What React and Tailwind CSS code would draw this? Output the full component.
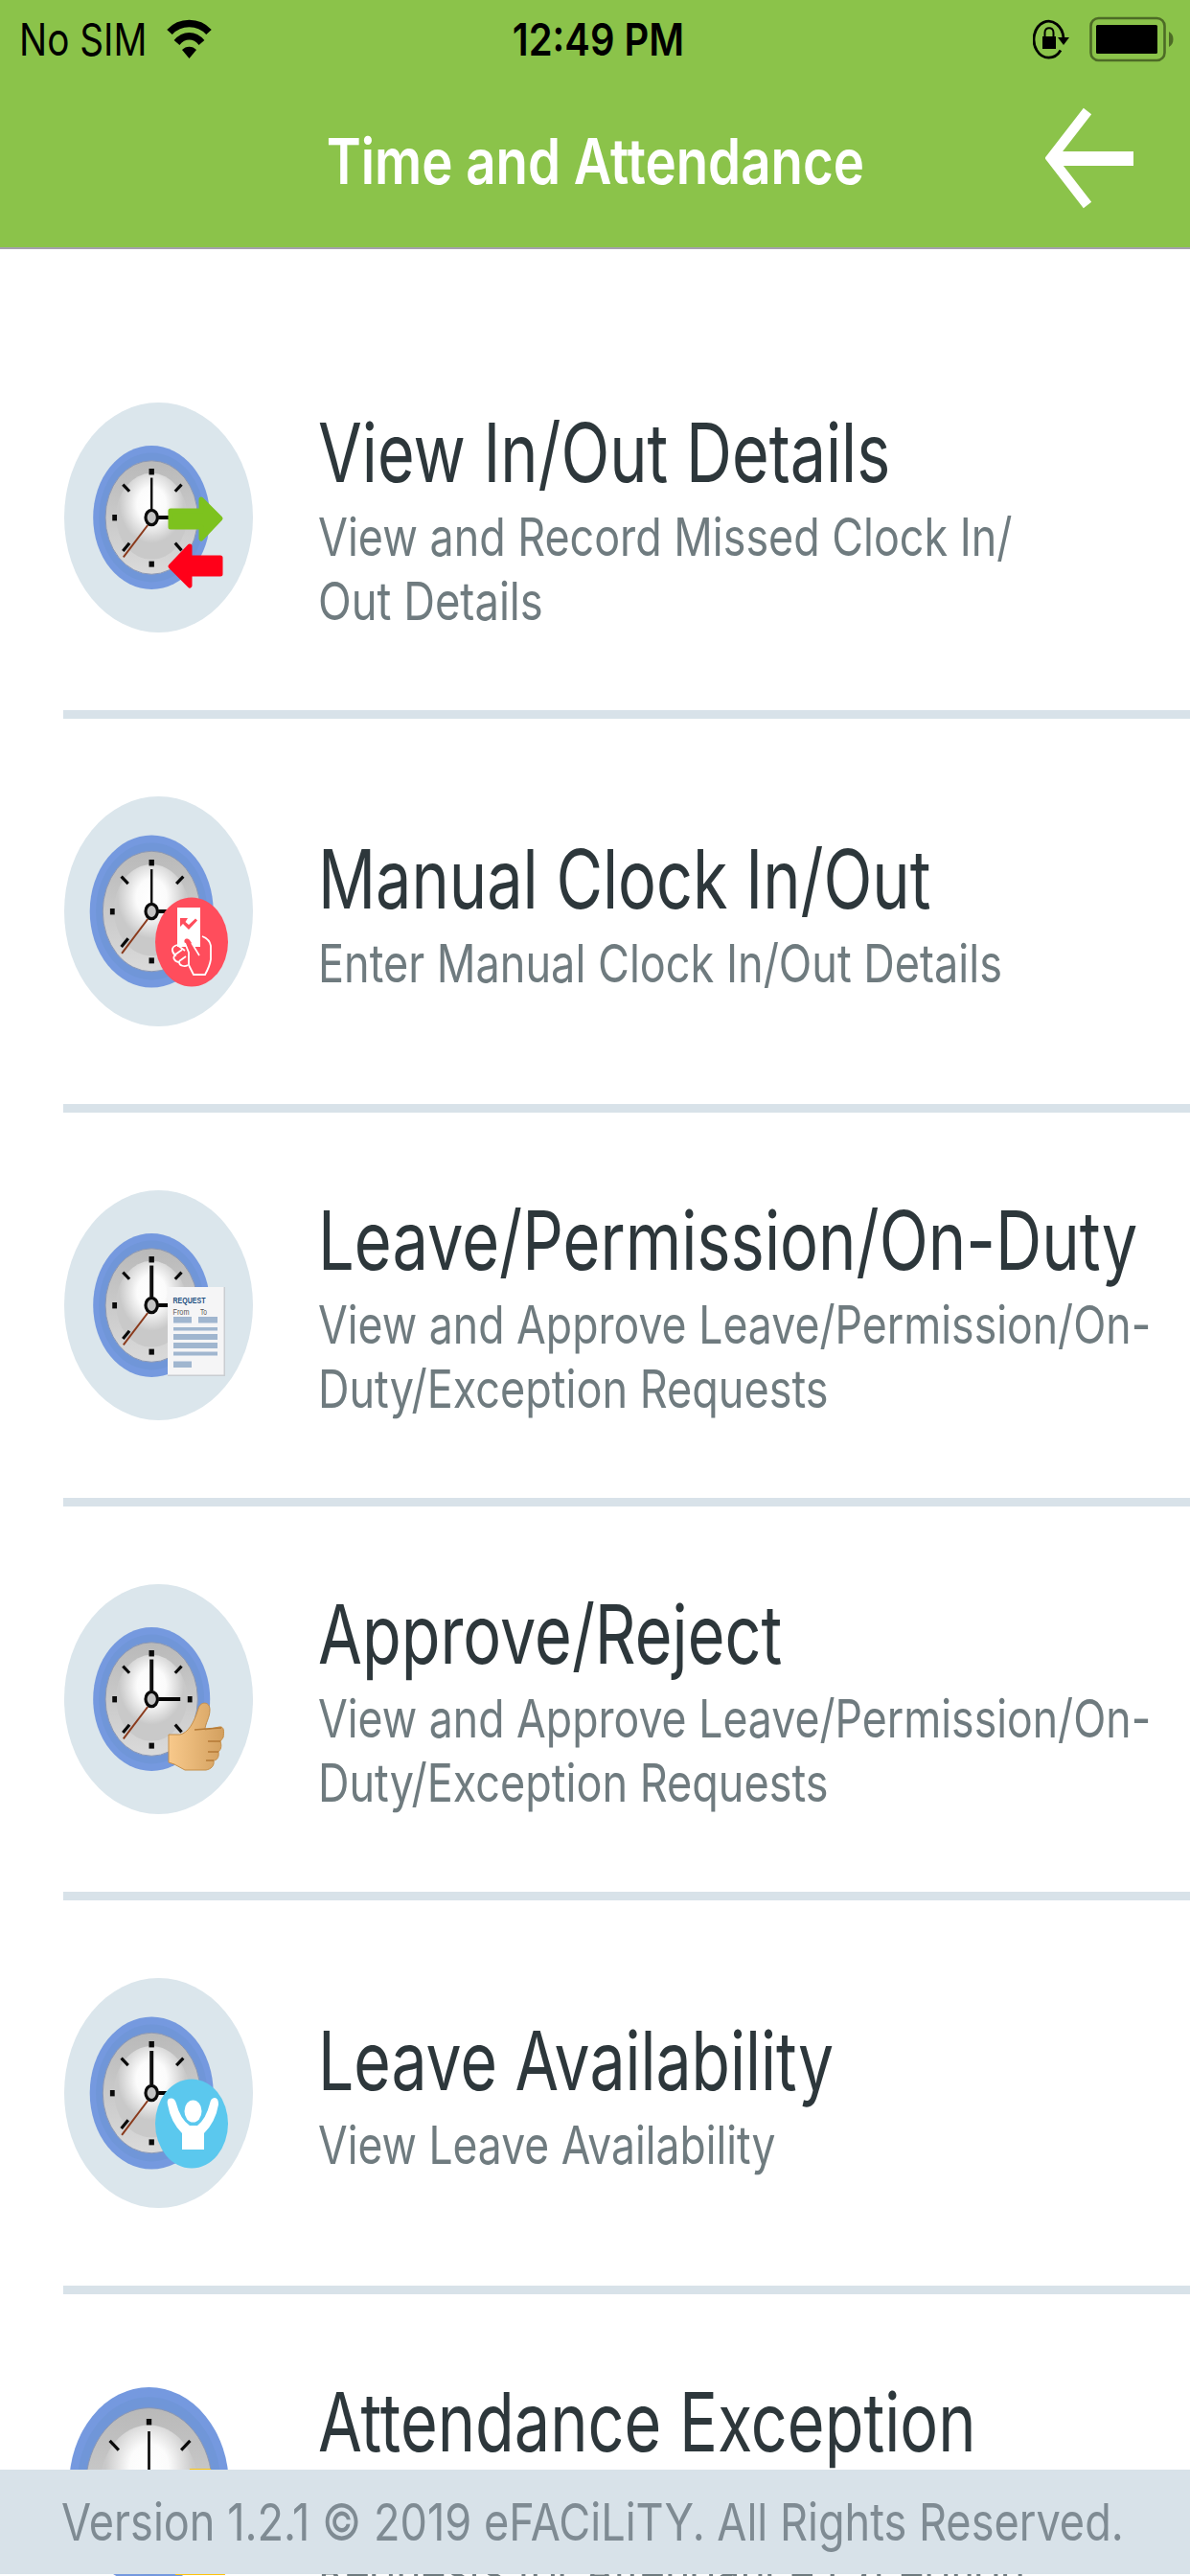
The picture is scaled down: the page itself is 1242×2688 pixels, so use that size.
import React from "react";

function Face({ id, cx, cy, rx, ry, minute = 3 }) {
  const fx = rx * 0.79;
  const fy = ry * 0.79;
  return (
    <g>
      <defs>
        <radialGradient id={id} cx="0.5" cy="0.36" r="0.45">
          <stop offset="0" stopColor="#ffffff" />
          <stop offset="0.45" stopColor="#fbfbfb" />
          <stop offset="1" stopColor="#c9c9c9" />
        </radialGradient>
        <linearGradient id={id + "b"} x1="0" y1="0" x2="0" y2="1">
          <stop offset="0" stopColor="#b9b9b9" />
          <stop offset="1" stopColor="#dadada" />
        </linearGradient>
      </defs>
      <ellipse cx={cx} cy={cy} rx={rx} ry={ry} fill="#7599df" />
      <ellipse cx={cx} cy={cy} rx={rx * 0.9} ry={ry * 0.9} fill="#7096d8" />
      <ellipse cx={cx} cy={cy} rx={fx} ry={fy} fill={"url(#" + id + "b)"} stroke="#8a97b4" strokeWidth="1" />
      <ellipse cx={cx} cy={cy - fy * 0.02} rx={fx * 0.77} ry={fy * 0.76} fill={"url(#" + id + ")"} />
      <g fill="#0a0a0a">
        <rect x={cx - 2.7} y={cy - fy * 0.86} width="5.4" height="6.4" />
        <rect x={cx - 2.7} y={cy + fy * 0.77} width="5.4" height="6" />
        <rect x={cx - fx * 0.85} y={cy - 3} width="4.8" height="6.4" />
        <rect x={cx + fx * 0.78} y={cy - 3} width="4.8" height="6.4" />
      </g>
      <g stroke="#0a0a0a" strokeWidth="3.2">
        <path d={`M${cx - fx * 0.62} ${cy - fy * 0.58}L${cx - fx * 0.48} ${cy - fy * 0.46}`} />
        <path d={`M${cx + fx * 0.65} ${cy - fy * 0.58}L${cx + fx * 0.51} ${cy - fy * 0.46}`} />
        <path d={`M${cx - fx * 0.62} ${cy + fy * 0.59}L${cx - fx * 0.48} ${cy + fy * 0.45}`} />
        <path d={`M${cx + fx * 0.51} ${cy + fy * 0.45}L${cx + fx * 0.65} ${cy + fy * 0.58}`} />
      </g>
      <path d={`M${cx} ${cy - 9}V${cy - fy * 0.7}`} stroke="#111" strokeWidth={minute} />
      <path d={`M${cx + 7} ${cy}H${cx + 30}`} stroke="#050505" strokeWidth="4" />
      <path d={`M${cx - 4} ${cy + 8}L${cx - fx * 0.61} ${cy + fy * 0.7}`} stroke="#8a3a1c" strokeWidth="2" />
      <ellipse cx={cx} cy={cy} rx="6.2" ry="7.6" fill="#c4c4c4" stroke="#0a0a0a" strokeWidth="3.2" />
    </g>
  );
}

function Badge({ kind }) {
  if (kind === "arrows")
    return (
      <g strokeLinejoin="round" strokeWidth="5">
        <path d="M115 113H147V101L167 121L147 142V130H115Z" fill="#7dc21e" stroke="#7dc21e" />
        <path d="M167 162H135V150L115 171L135 191V179H167Z" fill="#ff0019" stroke="#ff0019" />
      </g>
    );
  if (kind === "card")
    return (
      <g>
        <ellipse cx="137" cy="152" rx="38" ry="46.5" fill="#ff4d5c" />
        <path d="M122 116H146V157H122Z" fill="#fff" />
        <path d="M125 127V136L128 133L134 139L143 129.500L141 127.500L134 134L130.500 131L133 127Z" fill="#ff4d5c" />
        <path d="M145 165L135 150C132 147 128 149 130 153L134 163V176L139 186H151Q156 177 157 170V156Q156 149 146 146V162Z" fill="#ff4d5c" />
        <path d="M130 153L134 163V176L139 186H151Q156 177 157 170V156Q156 149 148 146" fill="none" stroke="#fff" strokeWidth="1.800" />
        <path d="M122 155C115 157 116 162 120 166C116 168 120 173 124 173C124 177 130 178 133 176M120 165L127 160M124 172L131 167M122 155L130 161" fill="none" stroke="#fff" strokeWidth="1.800" />
        <path d="M145 166L137 153" fill="none" stroke="#fff" strokeWidth="1.600" />
      </g>
    );
  if (kind === "form")
    return (
      <g>
        <rect x="112" y="101" width="60" height="93" fill="#c9cdd1" />
        <rect x="112" y="101" width="58.500" height="91.500" fill="#f5f5f6" />
        <text x="117.500" y="117.500" fontFamily="Liberation Sans, sans-serif" fontWeight="700" fontSize="9.500" textLength="34" lengthAdjust="spacingAndGlyphs" fill="#1d5080">REQUEST</text>
        <text x="117.500" y="130" fontFamily="Liberation Sans, sans-serif" fontSize="8.500" textLength="17" lengthAdjust="spacingAndGlyphs" fill="#555">From</text>
        <text x="146" y="130" fontFamily="Liberation Sans, sans-serif" fontSize="8.500" textLength="7" lengthAdjust="spacingAndGlyphs" fill="#555">To</text>
        <g fill="#a0b6cf">
          <rect x="118" y="132" width="19" height="6.500" />
          <rect x="144" y="132" width="20" height="6.500" />
          <rect x="118" y="143" width="46" height="3.500" />
          <rect x="118" y="150" width="46" height="6" />
          <rect x="118" y="159" width="46" height="6" />
          <rect x="118" y="168.500" width="46" height="4" />
          <rect x="118" y="178.500" width="19" height="6.500" />
        </g>
      </g>
    );
  if (kind === "thumb")
    return (
      <g>
        <defs>
          <linearGradient id="skin" x1="0" x2="1">
            <stop offset="0" stopColor="#f8c98b" />
            <stop offset="1" stopColor="#d3a05f" />
          </linearGradient>
        </defs>
        <path d="M113 157H125C133 155 139 146 144 130C146 122 156 122 156 131C156 140 151 145 151 152L166 149C171 148 171 154 170 160L167 164C169 170 167 173 165 175C166 181 163 184 160 184C161 190 157 193 152 194H130L119 188L113 186Z" fill="url(#skin)" stroke="#c68f49" strokeWidth="1" />
        <path d="M140 152L152 151L168 150M154 164H167M154 175H165M152 184H160" fill="none" stroke="#b57a36" strokeWidth="1.500" />
      </g>
    );
  if (kind === "person")
    return (
      <g>
        <ellipse cx="137" cy="152" rx="38" ry="46.500" fill="#5bc8ee" />
        <ellipse cx="138.500" cy="139" rx="9" ry="11.500" fill="#fff" />
        <path d="M113 126Q111 128 112 132Q115 150 127 162V179H150V162Q162 150 165 132Q165 125 161 125Q157 125 156 131Q152 147 143 154H135Q125 147 121 131Q119 124 113 126Z" fill="#fff" />
      </g>
    );
  return null;
}

function RowIcon({ kind, big }) {
  if (kind === "exception")
    return (
      <svg className="h-[240px] w-[197px] shrink-0" viewBox="0 0 197 240">
        <Face id="fx" cx={88.5} cy={119} rx={83.5} ry={103} minute={2.8} />
        <path d="M131 101H153L168 212H116Z" fill="#fdc30b" />
      </svg>
    );
  return (
    <svg className="h-[240px] w-[197px] shrink-0" viewBox="0 0 197 240">
      <ellipse cx="98.500" cy="120" rx="98.500" ry="120" fill="#dbe6ec" />
      <Face id={"f" + kind} cx={91.2} cy={120} rx={big ? 64.5 : 61} ry={big ? 79.5 : 75} minute={kind === "arrows" || kind === "card" ? 2.5 : 4} />
      <g transform="translate(-4 0)">
        <Badge kind={kind} />
      </g>
    </svg>
  );
}

const rows = [
  { kind: "arrows", title: ["View In/Out Details", "scale-x-[0.7815]"], lines: [["View and Record Missed Clock In/", "scale-x-[0.8155]"], ["Out Details", "scale-x-[0.825]"]] },
  { kind: "card", big: true, title: ["Manual Clock In/Out", "scale-x-[0.783]"], lines: [["Enter Manual Clock In/Out Details", "scale-x-[0.819]"]] },
  { kind: "form", title: ["Leave/Permission/On-Duty", "scale-x-[0.786]"], lines: [["View and Approve Leave/Permission/On-", "scale-x-[0.811]"], ["Duty/Exception Requests", "scale-x-[0.8185]"]] },
  { kind: "thumb", title: ["Approve/Reject", "scale-x-[0.783]"], lines: [["View and Approve Leave/Permission/On-", "scale-x-[0.811]"], ["Duty/Exception Requests", "scale-x-[0.8185]"]] },
  { kind: "person", big: true, title: ["Leave Availability", "scale-x-[0.777]"], lines: [["View Leave Availability", "scale-x-[0.808]"]] },
  { kind: "exception", title: ["Attendance Exception", "scale-x-[0.783]"], lines: [["\u00a0", "scale-x-[0.81]"], ["Requests for Attendance Exception", "scale-x-[0.81]"]] },
];

function Row({ row }) {
  return (
    <li className="ml-[66px] flex h-[411px] shrink-0 items-center border-b-[9px] border-[#d8e2e9]">
      <div className="flex pl-px">
        <RowIcon kind={row.kind} big={row.big} />
      </div>
      <div className="ml-[68px] flex flex-col items-start whitespace-nowrap">
        <h2 className={"origin-left text-[85px] leading-[108px] text-[#2d373b] " + row.title[1]}>{row.title[0]}</h2>
        {row.lines.map(([text, scale]) => (
          <p key={text} className={"origin-left text-[55px] leading-[66.6px] text-[#6f7b7f] " + scale}>{text}</p>
        ))}
      </div>
    </li>
  );
}

function StatusBar() {
  return (
    <div className="grid h-[82px] grid-cols-3 items-center text-[47px] leading-[82px] text-black">
      <div className="flex items-center pl-[20px]">
        <span className="w-[154px] origin-left scale-x-[0.823] whitespace-nowrap">No SIM</span>
        <svg className="h-[42px] w-[47px]" viewBox="0 0 47 42">
          <path d="M3 13.500C14 1.500 33 1.500 44 13.500" fill="none" stroke="#000" strokeWidth="7.500" />
          <path d="M10.500 24.500C18 15.500 29 15.500 36.500 24.500" fill="none" stroke="#000" strokeWidth="7.500" />
          <path d="M16 32C20 27.500 27 27.500 31 32L23.500 41Z" fill="#000" />
        </svg>
      </div>
      <div className="flex justify-center pl-[8px]">
        <span className="scale-x-[0.85] whitespace-nowrap font-semibold">12:49 PM</span>
      </div>
      <div className="flex items-center justify-end gap-[21px] pr-[16px]">
        <svg className="h-[42px] w-[38px]" viewBox="0 0 38 42">
          <path d="M29 32.500A15.500 19 0 1 1 32 20" fill="none" stroke="#000" strokeWidth="2.800" />
          <path d="M26 19H38L32 27Z" fill="#000" />
          <rect x="10" y="18" width="14" height="13" fill="#000" />
          <path d="M12.500 19V14C12.500 7.500 21.500 7.500 21.500 14V19" fill="none" stroke="#000" strokeWidth="2" />
        </svg>
        <svg className="h-[48px] w-[89px]" viewBox="0 0 89 48">
          <rect x="1.500" y="2" width="77" height="44" rx="8" fill="none" stroke="#4d6b26" strokeWidth="2.600" />
          <rect x="7" y="9" width="64" height="30" rx="1.500" fill="#000" />
          <path d="M83 16C89 19 89 29 83 32Z" fill="#4d6b26" />
        </svg>
      </div>
    </div>
  );
}

export default function App() {
  return (
    <div className="flex h-[2688px] w-[1242px] flex-col overflow-hidden bg-white font-['Inter',sans-serif]">
      <header className="h-[260px] shrink-0 border-b-2 border-[#a5a0ae] bg-[#8bc34a]">
        <StatusBar />
        <div className="grid h-[173px] grid-cols-[1fr_auto_1fr] items-center">
          <span />
          <h1 className="scale-x-[0.827] whitespace-nowrap text-[66px] leading-[173px] font-semibold text-white">Time and Attendance</h1>
          <svg className="mr-[59px] mb-[7px] h-[124px] w-[92px] justify-self-end" viewBox="0 0 92 124">
            <path d="M44 13L6 62L44 111" fill="none" stroke="#fff" strokeWidth="10.500" />
            <path d="M6 62.500H92" stroke="#fff" strokeWidth="15" />
          </svg>
        </div>
      </header>
      <main className="relative h-[2428px] shrink-0 overflow-hidden">
        <ul className="flex flex-col pt-[79px]">
          {rows.map((row) => (
            <Row key={row.kind} row={row} />
          ))}
        </ul>
        <footer className="absolute bottom-[2px] left-0 h-[109px] w-full bg-[#d8e2e9] pl-[64px] text-[54px] leading-[109px] text-[#7f8b93]">
          <p className="w-max origin-left scale-x-[0.835] whitespace-nowrap">Version 1.2.1 © 2019 eFACiLiTY. All Rights Reserved.</p>
        </footer>
      </main>
    </div>
  );
}
